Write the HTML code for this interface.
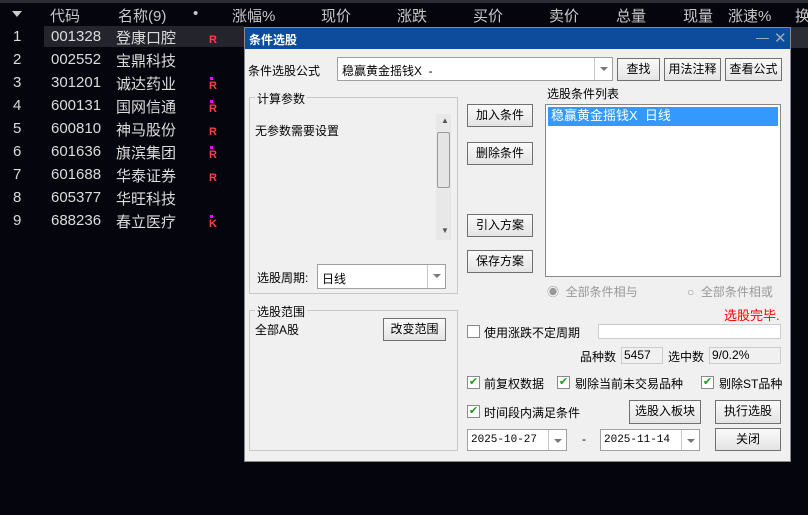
<!DOCTYPE html><html><head><meta charset="utf-8"><style>
*{margin:0;padding:0;box-sizing:border-box}
body{width:808px;height:515px;background:#05050d;overflow:hidden;position:relative;font-family:"Liberation Sans","Noto Sans CJK SC",sans-serif;}
.a{position:absolute;white-space:nowrap}
.h{color:#c8c8c8;font-size:15px;top:5px}
.r{color:#dcdcdc;font-size:15px}
.d{position:absolute;left:244px;top:27px;width:547px;height:435px;background:#f0f0f0;border:1px solid #8a8a8a;font-size:12px;color:#000}
.d .a{font-size:12px}
.btn{position:absolute;background:linear-gradient(#fafafa,#e4e4e4);border:1px solid #707070;font-size:12px;text-align:center;line-height:20px}
.box{position:absolute;background:#fff;border:1px solid #a0a0a0}
.grp{position:absolute;border:1px solid #c8c8c8}
.cb{position:absolute;width:13px;height:13px;background:#fff;border:1px solid #8a8a8a;color:#1a9a1a;font-size:11px;line-height:11px;text-align:center}
.arr{position:absolute;right:0;top:0;width:18px;height:100%;border-left:1px solid #c8c8c8}
.arr:after{content:"";position:absolute;left:5px;top:9px;border:4px solid transparent;border-top:4px solid #777}
</style></head><body>
<div class="a" style="left:0;top:0;width:808px;height:3px;background:#2a2d35"></div>
<div class="a" style="left:12px;top:11px;border:5px solid transparent;border-top:6px solid #ccc"></div>
<div class="a h" style="left:50px">代码</div>
<div class="a h" style="left:118px">名称(9)</div>
<div class="a h" style="left:193px">•</div>
<div class="a h" style="left:232px">涨幅%</div>
<div class="a h" style="left:321px">现价</div>
<div class="a h" style="left:397px">涨跌</div>
<div class="a h" style="left:473px">买价</div>
<div class="a h" style="left:549px">卖价</div>
<div class="a h" style="left:616px">总量</div>
<div class="a h" style="left:683px">现量</div>
<div class="a h" style="left:728px">涨速%</div>
<div class="a h" style="left:795px">换</div>
<div class="a" style="left:44px;top:26px;width:200px;height:21px;background:#24242c"></div>
<div class="a" style="left:791px;top:27px;width:17px;height:21px;background:#2a2d35"></div>
<div id="rows"></div>
<script>
var d=[["001328","登康口腔","R",0],["002552","宝鼎科技","",0],["301201","诚达药业","R",1],["600131","国网信通","R",1],["600810","神马股份","R",0],["601636","旗滨集团","R",1],["601688","华泰证券","R",0],["605377","华旺科技","",0],["688236","春立医疗","K",1]];
var h="";d.forEach(function(r,i){var y=27+i*23;h+='<div class="a r" style="left:13px;top:'+(y+1)+'px">'+(i+1)+'</div><div class="a r" style="left:51px;top:'+(y+1)+'px">'+r[0]+'</div><div class="a r" style="left:116px;top:'+(y)+'px">'+r[1]+'</div>';if(r[2])h+='<div class="a" style="left:209px;top:'+(y+7)+'px;color:#ff4040;font-size:11px;font-weight:bold">'+r[2]+'</div>';if(r[3])h+='<div class="a" style="left:210px;top:'+(y+4)+'px;width:3px;height:3px;background:#f0f"></div>';});
document.getElementById("rows").innerHTML=h;
</script>
<div class="d">
<div class="a" style="left:0;top:0;width:545px;height:21px;background:#0d4c9c"></div>
<div class="a" style="left:4px;top:3px;color:#fff;font-weight:bold;font-size:12px">条件选股</div>
<div class="a" style="left:511px;top:10px;width:13px;height:1px;background:#9ab"></div>
<div class="a" style="left:529px;top:1px;color:#9ab;font-size:15px">✕</div>
<div class="a" style="left:3px;top:34px">条件选股公式</div>
<div class="box" style="left:92px;top:29px;width:276px;height:24px"><span class="a" style="left:4px;top:4px">稳赢黄金摇钱X&nbsp; -</span><div class="arr"></div></div>
<div class="btn" style="left:372px;top:30px;width:43px;height:23px">查找</div>
<div class="btn" style="left:419px;top:30px;width:57px;height:23px">用法注释</div>
<div class="btn" style="left:480px;top:30px;width:57px;height:23px">查看公式</div>
<div class="grp" style="left:4px;top:69px;width:209px;height:197px"></div>
<div class="a" style="left:10px;top:62px;background:#f0f0f0;padding:0 2px">计算参数</div>
<div class="a" style="left:10px;top:94px">无参数需要设置</div>
<div class="a" style="left:191px;top:86px;width:15px;height:126px;background:#e8e8e8"></div>
<div class="a" style="left:196px;top:88px;font-size:8px;color:#555">▲</div>
<div class="a" style="left:196px;top:198px;font-size:8px;color:#555">▼</div>
<div class="a" style="left:192px;top:104px;width:13px;height:56px;background:#e4e4e4;border:1px solid #999;border-radius:2px"></div>
<div class="a" style="left:12px;top:241px">选股周期:</div>
<div class="box" style="left:72px;top:236px;width:129px;height:25px"><span class="a" style="left:4px;top:5px">日线</span><div class="arr"></div></div>
<div class="btn" style="left:222px;top:76px;width:66px;height:23px">加入条件</div>
<div class="btn" style="left:222px;top:114px;width:66px;height:23px">删除条件</div>
<div class="btn" style="left:222px;top:186px;width:66px;height:23px">引入方案</div>
<div class="btn" style="left:222px;top:222px;width:66px;height:23px">保存方案</div>
<div class="a" style="left:302px;top:57px">选股条件列表</div>
<div class="box" style="left:300px;top:76px;width:236px;height:173px;border-color:#888"><div class="a" style="left:2px;top:2px;width:230px;height:19px;background:#3399ff;color:#fff;padding:2px 3px;font-size:13px;line-height:14px">稳赢黄金摇钱X&nbsp; 日线</div></div>
<div class="a" style="left:302px;top:255px;color:#999">◉&nbsp; 全部条件相与</div>
<div class="a" style="left:442px;top:255px;color:#999">○&nbsp; 全部条件相或</div>
<div class="a" style="left:479px;top:277px;color:#f00;font-size:13px">选股完毕.</div>
<div class="grp" style="left:4px;top:282px;width:209px;height:141px"></div>
<div class="a" style="left:10px;top:275px;background:#f0f0f0;padding:0 2px">选股范围</div>
<div class="a" style="left:10px;top:293px">全部A股</div>
<div class="btn" style="left:138px;top:290px;width:63px;height:23px">改变范围</div>
<div class="cb" style="left:222px;top:297px"></div>
<div class="a" style="left:239px;top:296px">使用涨跌不定周期</div>
<div class="box" style="left:353px;top:296px;width:183px;height:15px;border-color:#ccc"></div>
<div class="a" style="left:335px;top:320px">品种数</div>
<div class="a" style="left:376px;top:319px;width:42px;height:17px;border:1px solid #ccc;padding-left:2px">5457</div>
<div class="a" style="left:423px;top:320px">选中数</div>
<div class="a" style="left:464px;top:319px;width:72px;height:17px;border:1px solid #ccc;padding-left:2px">9/0.2%</div>
<div class="cb" style="left:222px;top:348px">✔</div><div class="a" style="left:239px;top:347px">前复权数据</div>
<div class="cb" style="left:312px;top:348px">✔</div><div class="a" style="left:330px;top:347px">剔除当前未交易品种</div>
<div class="cb" style="left:456px;top:348px">✔</div><div class="a" style="left:474px;top:347px">剔除ST品种</div>
<div class="cb" style="left:222px;top:377px">✔</div><div class="a" style="left:239px;top:376px">时间段内满足条件</div>
<div class="btn" style="left:384px;top:372px;width:72px;height:24px">选股入板块</div>
<div class="btn" style="left:470px;top:372px;width:66px;height:24px">执行选股</div>
<div class="box" style="left:222px;top:401px;width:100px;height:22px"><span class="a" style="left:3px;top:4px;font-family:'Liberation Mono',monospace;font-size:11px">2025-10-27</span><div class="arr"></div></div>
<div class="a" style="left:337px;top:404px">-</div>
<div class="box" style="left:355px;top:401px;width:100px;height:22px"><span class="a" style="left:3px;top:4px;font-family:'Liberation Mono',monospace;font-size:11px">2025-11-14</span><div class="arr"></div></div>
<div class="btn" style="left:470px;top:400px;width:66px;height:23px">关闭</div>
</div>
</body></html>
